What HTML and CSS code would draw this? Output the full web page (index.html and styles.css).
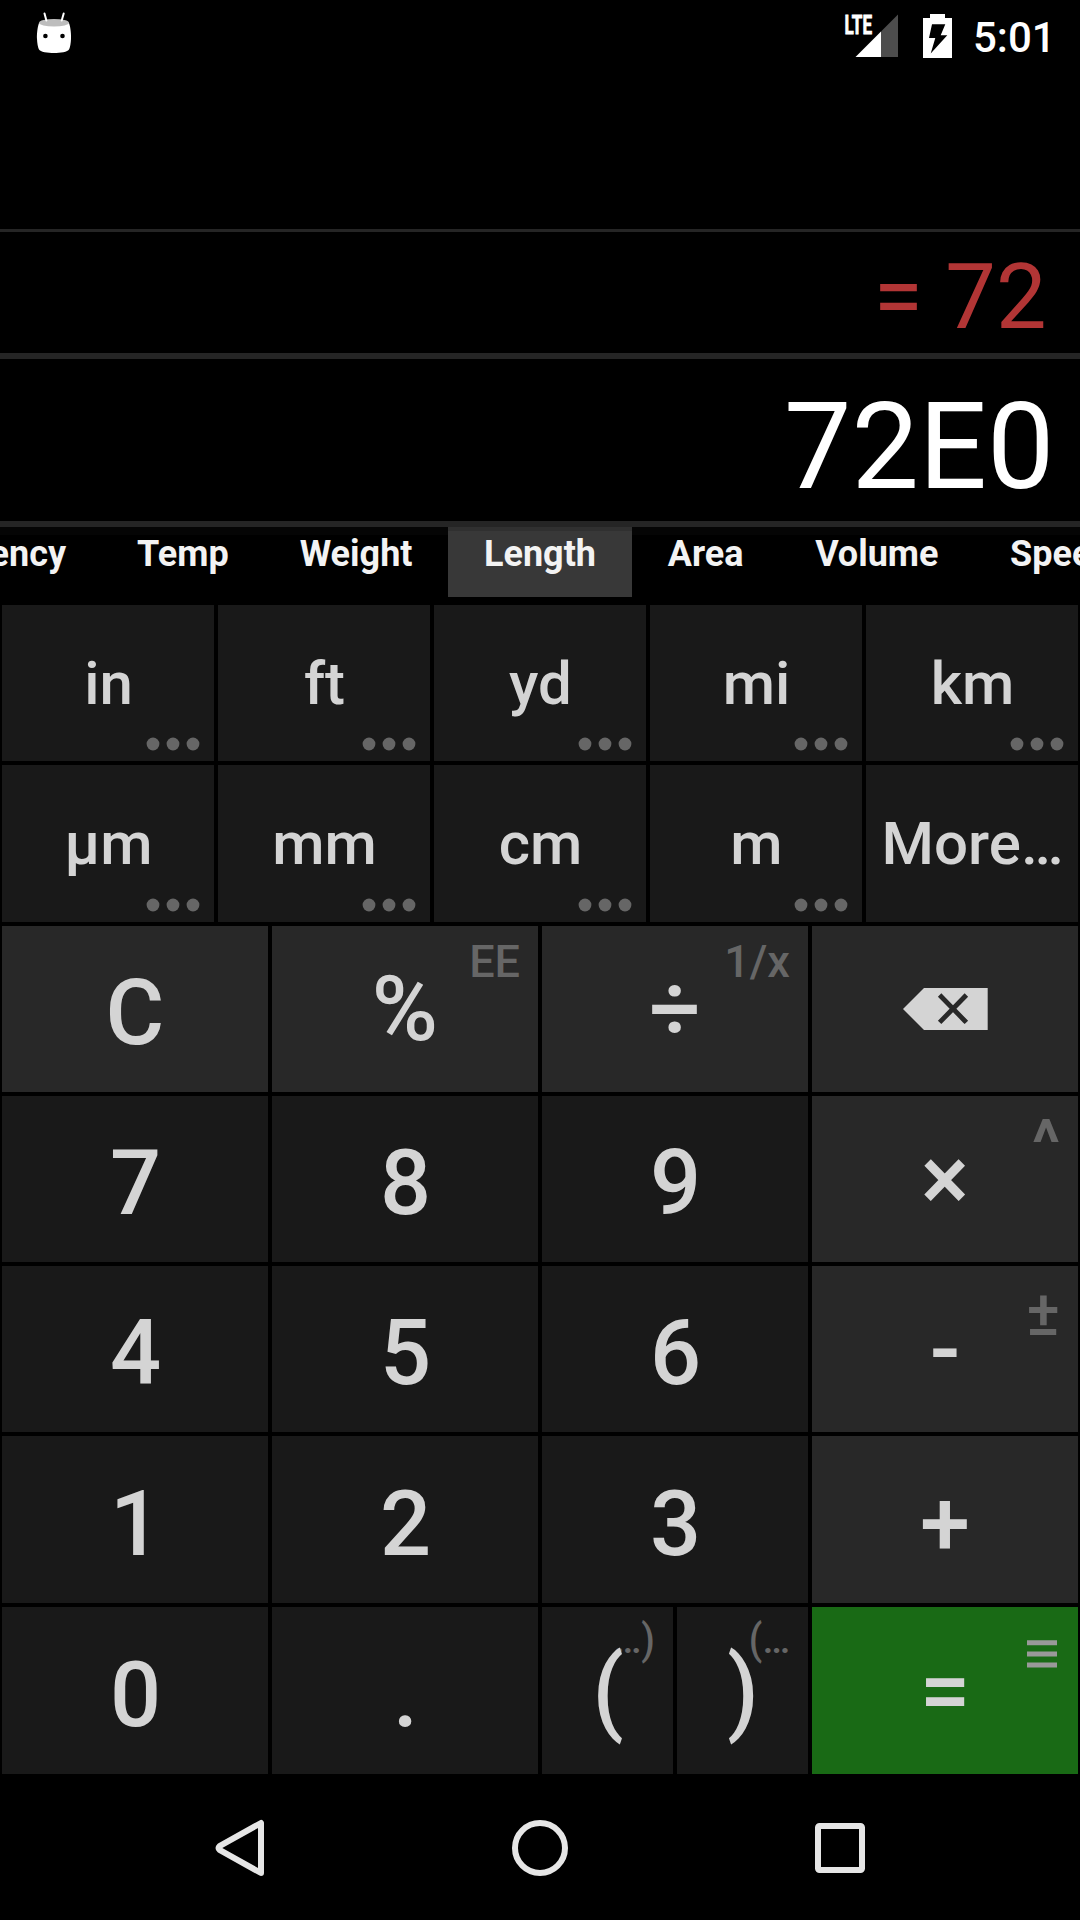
FILE: index.html
```html
<!DOCTYPE html>
<html lang="en">
<head>
<meta charset="utf-8">
<title>Calculator</title>
<link rel="stylesheet" href="styles.css">
</head>
<body>
<svg class="defs" width="0" height="0" aria-hidden="true">
  <symbol id="dots" viewBox="0 0 54 14"><circle cx="7" cy="7" r="6.4"/><circle cx="27" cy="7" r="6.4"/><circle cx="47" cy="7" r="6.4"/></symbol>
</svg>
<div class="screen">
  <header class="status">
    <svg class="robot" width="36" height="42" viewBox="36 12 36 42">
      <path d="M39 23C37.200 28 36.800 35 37 39Q37.300 46 39 49.500C40 52 48 53 54 53S68 52 69 49.500Q70.700 46 71 39C71.200 35 70.800 28 69 23Z" fill="#fff"/>
      <ellipse cx="54" cy="22.700" rx="15" ry="3.800" fill="#bdbdbd"/>
      <path d="M44.500 13.500L46.400 20.500M63.700 13.500L61.700 20.500" stroke="#fff" stroke-width="2" stroke-linecap="round"/>
      <circle cx="45.400" cy="36" r="2.300"/><circle cx="62.500" cy="36" r="2.300"/>
    </svg>
    <div class="status-right">
      <svg class="signal" width="54" height="44" viewBox="844 14 54 44">
        <path d="M898 14.500V57H881V31.500Z" fill="#4d4d4d"/>
        <path d="M881 31.500V57H855.500Z" fill="#fff"/>
        <text class="lte" x="844.500" y="33.500" textLength="27.500" lengthAdjust="spacingAndGlyphs">LTE</text>
      </svg>
      <svg class="battery" width="29" height="44" viewBox="923 14 29 44">
        <path d="M930 14H945V18H952V58H923V18H930Z" fill="#fff"/>
        <path d="M932 24.300H945.300L940.700 35.300H947.300L930.700 53.500L935.300 38H929Z" fill="#000"/>
      </svg>
      <span class="clock">5:01</span>
    </div>
  </header>
  <div class="history"></div>
  <div class="result">= 72</div>
  <div class="entry">72E0</div>
  <nav class="tabs">
    <div class="tabs-before"><span class="tab">Currency</span><span class="tab">Temp</span><span class="tab">Weight</span></div>
    <span class="tab selected">Length</span>
    <div class="tabs-after"><span class="tab">Area</span><span class="tab">Volume</span><span class="tab">Speed</span></div>
  </nav>
  <section class="units">
    <div class="key">in<svg class="more"><use href="#dots"/></svg></div>
    <div class="key">ft<svg class="more"><use href="#dots"/></svg></div>
    <div class="key">yd<svg class="more"><use href="#dots"/></svg></div>
    <div class="key">mi<svg class="more"><use href="#dots"/></svg></div>
    <div class="key">km<svg class="more"><use href="#dots"/></svg></div>
    <div class="key">µm<svg class="more"><use href="#dots"/></svg></div>
    <div class="key">mm<svg class="more"><use href="#dots"/></svg></div>
    <div class="key">cm<svg class="more"><use href="#dots"/></svg></div>
    <div class="key">m<svg class="more"><use href="#dots"/></svg></div>
    <div class="key">More…</div>
  </section>
  <section class="pad">
    <div class="key op">C</div>
    <div class="key op raised">%<span class="hint">EE</span></div>
    <div class="key op raised">÷<span class="hint">1/x</span></div>
    <div class="key op erase">
      <svg width="85" height="42" viewBox="0 0 85 42"><path d="M0 21L21 0H84.700V42H21Z" fill="#d4d4d4"/><path d="M38.300 8.700L61.700 32.700M61.700 8.700L38.300 32.700" stroke="#282828" stroke-width="4.800" stroke-linecap="square"/></svg>
    </div>
    <div class="key">7</div>
    <div class="key">8</div>
    <div class="key">9</div>
    <div class="key op raised">×<span class="hint symbol caret">^</span></div>
    <div class="key">4</div>
    <div class="key">5</div>
    <div class="key">6</div>
    <div class="key op raised">-<span class="hint symbol">±</span></div>
    <div class="key">1</div>
    <div class="key">2</div>
    <div class="key">3</div>
    <div class="key op">+</div>
    <div class="key">0</div>
    <div class="key">.</div>
    <div class="parens">
      <div class="key raised"><span class="hint group">…<span class="bracket">)</span></span><span class="glyph">(</span></div>
      <div class="key raised"><span class="hint group"><span class="bracket">(</span>…</span><span class="glyph">)</span></div>
    </div>
    <div class="key equals raised">=<svg class="menu" width="30" height="28" viewBox="0 0 30 28"><path d="M0 2.800H30M0 13.900H30M0 25H30" stroke="#999" stroke-width="5"/></svg></div>
  </section>
  <footer class="nav">
    <svg width="50" height="58" viewBox="215 1819 50 58"><path d="M261 1823V1873L219.500 1849.800Q217.500 1848 219.500 1846.200Z"/></svg>
    <svg width="58" height="58" viewBox="0 0 58 58"><circle cx="29" cy="29" r="25"/></svg>
    <svg width="50" height="50" viewBox="0 0 50 50"><rect x="3" y="3" width="44" height="44" rx="1.500"/></svg>
  </footer>
</div>
</body>
</html>
```
FILE: styles.css
```css
* { box-sizing: border-box; }
body { margin: 0; background: #000; font-family: Roboto, sans-serif; }
.defs { position: absolute; }
.screen { width: 1080px; height: 1920px; display: flex; flex-direction: column; overflow: hidden; }

.status { height: 72px; display: flex; justify-content: space-between; align-items: flex-start; padding: 12px 28px 0 36px; }
.status-right { display: flex; padding-top: 2px; }
.signal { overflow: visible; }
.battery { margin-left: 25px; }
.lte { font-family: Roboto, sans-serif; font-weight: 700; font-size: 26px; fill: #fff; stroke: #fff; stroke-width: 0.8px; }
.clock { width: 79px; margin-left: 21px; color: #fff; font-size: 42px; line-height: 48px; font-weight: 500; white-space: nowrap; }

.history { height: 160px; border-bottom: 3px solid #252525; }
.result, .entry { text-align: right; border-bottom: 6px solid #252525; white-space: pre; }
.result { height: 127px; padding: 10px 33.5px 0 0; color: #b23535; font-size: 90px; line-height: 111px; }
.entry { height: 168px; padding: 14px 25.5px 0 0; color: #fff; font-size: 120px; line-height: 148px; }

.tabs { height: 78px; display: flex; background: linear-gradient(#050505 8px, #000 8px); }
.tabs-before, .tabs-after { display: flex; overflow: hidden; height: 70px; }
.tabs-before { width: 448px; justify-content: flex-end; }
.tabs-after { width: 448px; }
.tab { flex: none; height: 70px; padding: 0 35.5px; color: #f3f3f3; font-size: 36px; font-weight: 700; line-height: 55px; }
.tabs-after .tab { padding: 0 35.8px; }
.tab.selected { width: 184px; text-align: center; background: linear-gradient(#303030 4px, #383838 4px); }

.units, .pad { display: grid; gap: 4px; padding: 0 2px; }
.units { grid-template-columns: repeat(5, 212px); grid-template-rows: 156px 157px; margin-bottom: 4px; }
.pad { grid-template-columns: repeat(4, 266px); grid-template-rows: 166px 166px 166px 167px 167px; }
.key { position: relative; display: flex; align-items: center; justify-content: center; padding-left: 1px; background: #191919; color: #d4d4d4; font-size: 60px; font-weight: 500; }
.pad .key { font-size: 90px; padding-top: 9px; }
.pad .op { background: #282828; }
.pad .op, .pad .equals { padding-left: 0; }
.pad .raised { padding-top: 1px; }
.pad .erase { padding: 0; }
.pad .equals { background: #196a15; }
.parens { display: grid; grid-template-columns: 131px 131px; gap: 4px; }
.glyph { position: relative; top: -1px; transform: scaleY(1.05); }

.more { position: absolute; right: 14px; bottom: 10px; width: 54px; height: 14px; fill: #666; }
.hint { position: absolute; right: 18px; top: 8px; color: #666; font-size: 45px; line-height: 55px; }
.hint.symbol { right: 18px; top: 20px; font-size: 63px; }
.hint.caret { font-size: 64px; font-weight: 700; }
.hint.group { top: 6px; font-size: 39px; }
.bracket { display: inline-block; transform: scaleY(1.09); }
.menu { position: absolute; right: 21px; top: 33px; }

.nav { flex: 1; display: flex; align-items: center; justify-content: space-between; padding: 4px 215px 2px; }
.nav svg { fill: none; stroke: #e6e6e6; stroke-width: 6; stroke-linejoin: round; }
```
